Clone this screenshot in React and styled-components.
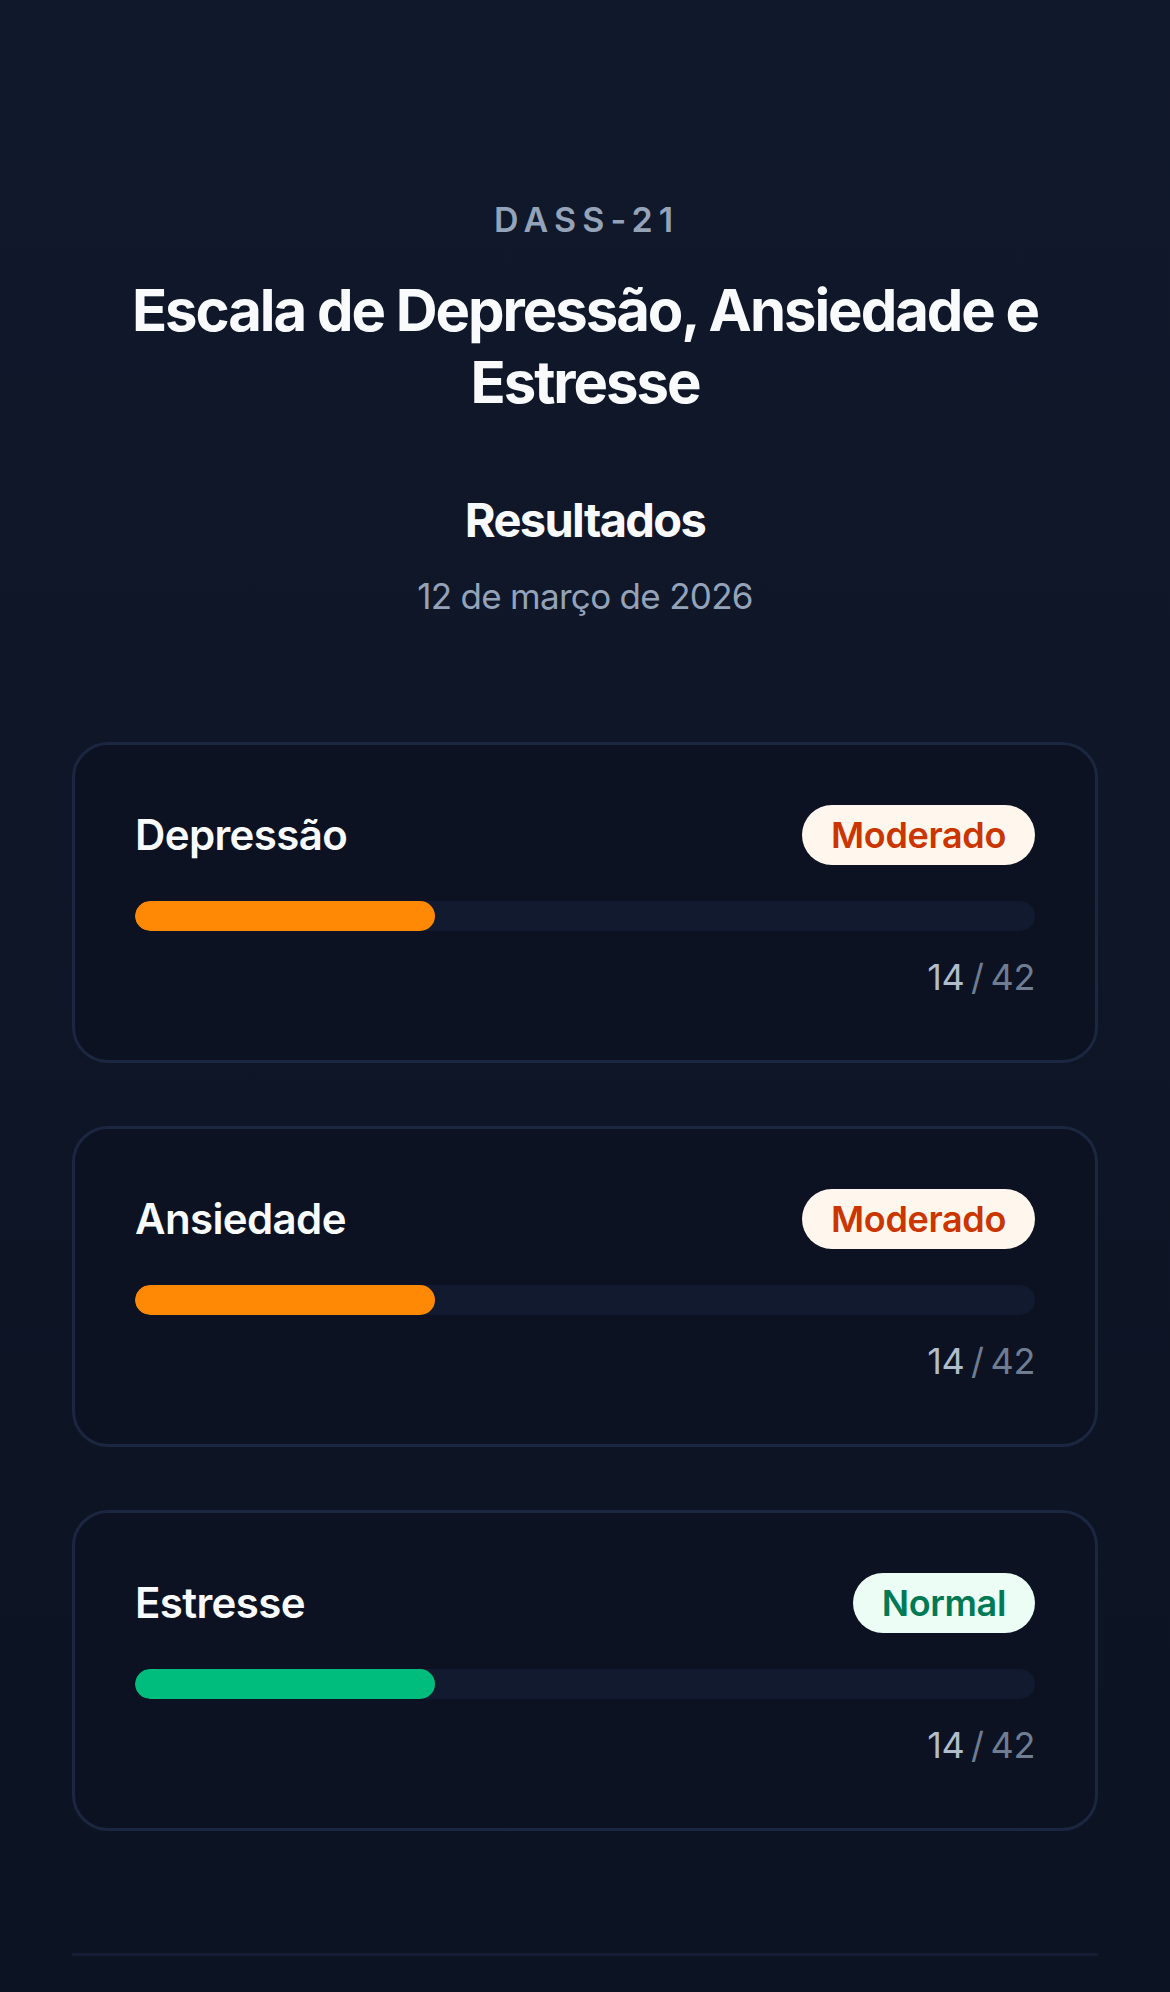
import React from "react";
import styled, {createGlobalStyle, css} from "styled-components";

const GlobalStyle = createGlobalStyle`
  html, body {
    margin: 0;
    padding: 0;
  }
  body {
    background: linear-gradient(180deg, #10182b 0%, #0e1627 45%, #0c1322 100%);
    min-height: 1992px;
    font-family: Inter, "Noto Sans", "Liberation Sans", sans-serif;
    color: #f8fafc;
    -webkit-font-smoothing: antialiased;
  }
`;

const tones = {
    moderate: {
        fill: "#ff8904",
        badgeBg: "#fff7ed",
        badgeText: "#ca3500"
    },
    normal: {
        fill: "#00bc7d",
        badgeBg: "#ecfdf5",
        badgeText: "#007a55"
    }
};

const Page = styled.main`
  min-height: 1992px;
  padding: 0 72px;
  box-sizing: border-box;
`;

const Header = styled.header`
  padding-top: 196px;
  text-align: center;
`;

const Eyebrow = styled.p`
  margin: 0;
  font-size: 34px;
  line-height: 48px;
  font-weight: 600;
  letter-spacing: 0.18em;
  padding-left: 0.1em;
  color: #94a3b8;
`;

const Title = styled.h1`
  margin: 30px 0 0;
  font-size: 58px;
  line-height: 72px;
  font-weight: 700;
  letter-spacing: -0.035em;
  color: #f8fafc;
`;

const Subtitle = styled.h2`
  margin: 66px 0 0;
  font-size: 47px;
  line-height: 72px;
  font-weight: 700;
  letter-spacing: -0.035em;
  color: #f8fafc;
`;

const DateText = styled.p`
  margin: 13px 0 0;
  font-size: 35px;
  line-height: 54px;
  font-weight: 400;
  letter-spacing: -0.02em;
  color: #94a3b8;
`;

const CardList = styled.section`
  display: flex;
  flex-direction: column;
  gap: 63px;
  margin-top: 119px;
`;

const Card = styled.article`
  background: #0c1221;
  border: 3px solid #1b2640;
  border-radius: 36px;
  padding: 60px;
`;

const CardHeader = styled.div`
  display: flex;
  align-items: center;
  justify-content: space-between;
  height: 60px;
`;

const ScaleName = styled.h3`
  margin: 0;
  font-size: 42px;
  line-height: 60px;
  font-weight: 600;
  letter-spacing: -0.015em;
  color: #f8fafc;
`;

const Badge = styled.span`
  display: inline-block;
  height: 60px;
  line-height: 60px;
  padding: 0 29px;
  border-radius: 999px;
  font-size: 36px;
  font-weight: 600;
  letter-spacing: -0.01em;
  ${({tone}) => css`
    background: ${tones[tone].badgeBg};
    color: ${tones[tone].badgeText};
  `}
`;

const Track = styled.div`
  margin-top: 36px;
  height: 30px;
  border-radius: 15px;
  background: #111a2e;
  overflow: hidden;
`;

const Fill = styled.div`
  height: 100%;
  border-radius: 15px;
  background: ${({tone}) => tones[tone].fill};
`;

const Score = styled.p`
  margin: 23px 0 0;
  text-align: right;
  font-size: 36px;
  line-height: 46px;
  letter-spacing: -0.01em;
  word-spacing: -3px;
  color: #6f7d93;
`;

const ScoreValue = styled.span`
  color: #b1bccc;
`;

const Divider = styled.hr`
  margin: 122px 0 0;
  border: 0;
  height: 3px;
  background: #141d33;
`;

const results = [
    {name: "Depressão", level: "Moderado", tone: "moderate", score: 14, max: 42},
    {name: "Ansiedade", level: "Moderado", tone: "moderate", score: 14, max: 42},
    {name: "Estresse", level: "Normal", tone: "normal", score: 14, max: 42}
];

const ResultCard = ({name, level, tone, score, max}) =>
    <Card>
        <CardHeader>
            <ScaleName>{name}</ScaleName>
            <Badge tone={tone}>{level}</Badge>
        </CardHeader>
        <Track>
            <Fill tone={tone} style={{width: `${(score / max) * 100}%`}}/>
        </Track>
        <Score>
            <ScoreValue>{score}</ScoreValue> / {max}
        </Score>
    </Card>

const App = () => (
    <React.Fragment>
        <GlobalStyle/>
        <Page>
            <Header>
                <Eyebrow>DASS-21</Eyebrow>
                <Title>Escala de Depressão, Ansiedade e Estresse</Title>
                <Subtitle>Resultados</Subtitle>
                <DateText>12 de março de 2026</DateText>
            </Header>
            <CardList>
                {results.map((item, index) => <ResultCard {...item} key={index}/>)}
            </CardList>
            <Divider/>
        </Page>
    </React.Fragment>
);

export default App;
